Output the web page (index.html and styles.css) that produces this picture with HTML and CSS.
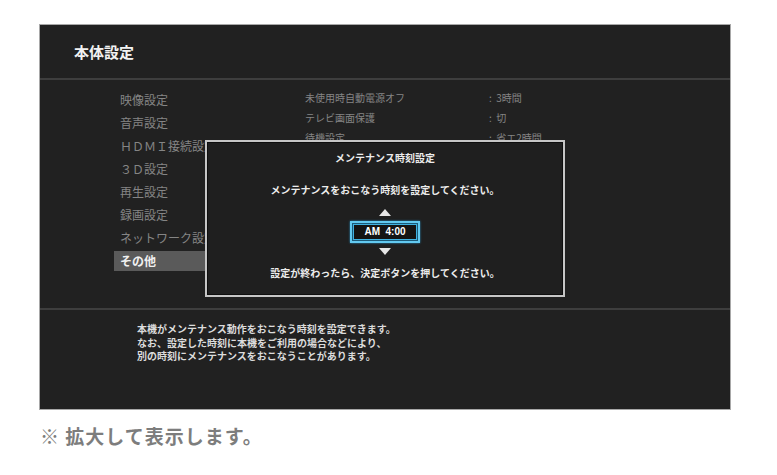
FILE: index.html
```html
<!DOCTYPE html>
<html lang="ja">
<head>
  <meta charset="UTF-8" />
  <title>本体設定</title>
  <link rel="stylesheet" href="styles.css">
</head>
<body>

  <div class="page">
    <div class="screen">
      <div class="screen-head">
        <h1>本体設定</h1>
      </div>

      <div class="screen-body">
        <ul class="menu">
          <li>映像設定</li>
          <li>音声設定</li>
          <li>ＨＤＭＩ接続設定</li>
          <li>３Ｄ設定</li>
          <li>再生設定</li>
          <li>録画設定</li>
          <li>ネットワーク設定</li>
          <li class="active">その他</li>
        </ul>

        <div class="detail">
          <div class="row"><span class="label">未使用時自動電源オフ</span><span class="value">:  3時間</span></div>
          <div class="row"><span class="label">テレビ画面保護</span><span class="value">:  切</span></div>
          <div class="row"><span class="label">待機設定</span><span class="value">:  省エ2時間</span></div>
        </div>

        <div class="dialog">
          <div class="dialog-title">メンテナンス時刻設定</div>
          <div class="dialog-msg">メンテナンスをおこなう時刻を設定してください。</div>
          <svg class="arrow" width="12" height="7" viewBox="0 0 12 7"><polygon points="6,0 12,7 0,7" fill="#e6e6e6"/></svg>
          <div class="time-box">AM  4:00</div>
          <svg class="arrow" width="12" height="7" viewBox="0 0 12 7"><polygon points="0,0 12,0 6,7" fill="#e6e6e6"/></svg>
          <div class="dialog-msg bottom">設定が終わったら、決定ボタンを押してください。</div>
        </div>
      </div>

      <div class="screen-help">
        <p>本機がメンテナンス動作をおこなう時刻を設定できます。<br>
        なお、設定した時刻に本機をご利用の場合などにより、<br>
        別の時刻にメンテナンスをおこなうことがあります。</p>
      </div>
    </div>

    <p class="caption">※ 拡大して表示します。</p>
  </div>

</body>
</html>
```

FILE: styles.css
```css
body {
  margin: 0;
  background: #fff;
  font-family: "Noto Sans CJK JP", "Noto Sans", sans-serif;
}

.page {
  padding: 24px 0 0 39px;
}

.screen {
  width: 690px;
  background: #212121;
  border: 1px solid #a8a8a8;
}

.screen-head {
  height: 53px;
  display: flex;
  align-items: center;
  padding-left: 34px;
  border-bottom: 2px solid #3e3e3e;
}

.screen-head h1 {
  margin: 0;
  font-size: 15px;
  font-weight: 700;
  color: #f2f2f2;
}

.screen-body {
  position: relative;
  height: 228px;
  display: flex;
  box-sizing: border-box;
}

.menu {
  list-style: none;
  margin: 10px 0 0 74px;
  padding: 0;
  width: 176px;
  display: flex;
  flex-direction: column;
  gap: 3px;
}

.menu li {
  height: 20px;
  line-height: 20px;
  padding-left: 6px;
  font-size: 12px;
  color: #858585;
  white-space: nowrap;
}

.menu li.active {
  background: #5a5a5a;
  color: #f0f0f0;
  font-weight: 700;
}

.detail {
  margin: 8px 0 0 15px;
}

.detail .row {
  display: flex;
  height: 20px;
  line-height: 20px;
  font-size: 10px;
  color: #858585;
}

.detail .label {
  width: 184px;
}

.detail .value {
  white-space: pre;
}

.dialog {
  position: absolute;
  left: 165px;
  top: 60px;
  width: 356px;
  height: 153px;
  background: #1f1f1f;
  border: 2px solid #c6c6c6;
  box-shadow: inset 0 0 0 1px #0e0e0e;
  display: flex;
  flex-direction: column;
  align-items: center;
  color: #ececec;
  font-size: 10px;
  font-weight: 700;
}

.dialog-title {
  margin-top: 10px;
  line-height: 12px;
}

.dialog-msg {
  margin-top: 20px;
  line-height: 12px;
}

.dialog-msg.bottom {
  margin-top: 12px;
}

.arrow {
  display: block;
}

.dialog .arrow:first-of-type {
  margin-top: 13px;
}

.time-box {
  margin: 5px 0;
  width: 66px;
  height: 18px;
  line-height: 18px;
  text-align: center;
  border: 2px solid #62c9f0;
  box-shadow: inset 0 0 0 1px #1b5a78, inset 0 0 0 2px #3fb2e2, 0 0 2px #2a8fc0;
  background: #141414;
  color: #fff;
  font-family: "Liberation Sans", sans-serif;
  font-size: 10px;
  font-weight: 700;
  white-space: pre;
}

.screen-help {
  height: 101px;
  border-top: 2px solid #3e3e3e;
  box-sizing: border-box;
  padding: 12px 0 0 97px;
}

.screen-help p {
  margin: 0;
  font-size: 10px;
  line-height: 13.5px;
  font-weight: 700;
  color: #dcdcdc;
}

.caption {
  margin: 13px 0 0 1px;
  font-size: 19px;
  line-height: 26px;
  letter-spacing: 1px;
  font-weight: 700;
  color: #7d7d7d;
}
```
